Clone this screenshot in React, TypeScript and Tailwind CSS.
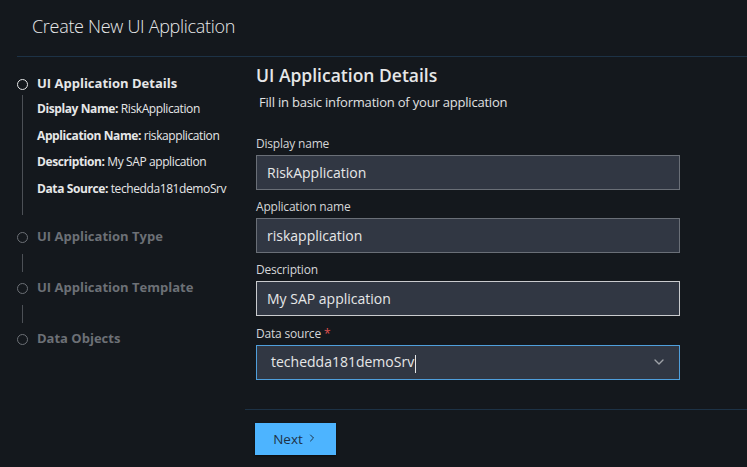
import { ChevronDown, ChevronRight } from "lucide-react";

const font = { fontFamily: '"Open Sans", "Noto Sans", sans-serif' };

function Field({
	label,
	value,
	required,
	variant = "default",
	select,
}: {
	label: string;
	value: string;
	required?: boolean;
	variant?: "default" | "light" | "focus";
	select?: boolean;
}) {
	const border =
		variant === "focus"
			? "border-[#4f9fdc]"
			: variant === "light"
				? "border-[#c9cbce]"
				: "border-[#6a6f77]";
	return (
		<div className="flex flex-col">
			<label className="text-[12px] leading-[16px] text-[#d4d6d8] tracking-[-0.2px] mb-[3px]">
				{label}
				{required && <span className="text-[#e0514f] ml-[3px]">*</span>}
			</label>
			<div
				className={`flex items-center justify-between w-[424px] h-[35px] bg-[#313743] border ${border} ${select ? "pl-[14px] pr-[12px]" : "pl-[10px]"}`}
			>
				<span className="text-[14px] text-[#e6e7e8]">
					{value}
					{select && <span className="inline-block w-px h-[18px] bg-[#e6e7e8] align-middle ml-[1px]" />}
				</span>
				{select && <ChevronDown size={16} strokeWidth={2} className="text-[#9ea2a8]" />}
			</div>
		</div>
	);
}

function Step({ title, active }: { title: string; active?: boolean }) {
	return (
		<div className="flex items-center gap-[9px] h-[18px]">
			<span className={`w-[11px] h-[11px] rounded-full border ${active ? "border-[#e6e7e8]" : "border-[#6c7076]"}`} />
			<span className={`text-[13px] font-bold ${active ? "text-[#e6e7e8]" : "text-[#6c7076]"}`}>{title}</span>
		</div>
	);
}

function Connector() {
	return <div className="ml-[5px] w-px bg-[#4c5056] h-[18px] mt-[8px] mb-[7px]" />;
}

export default function App() {
	const details = [
		["Display Name:", "RiskApplication"],
		["Application Name:", "riskapplication"],
		["Description:", "My SAP application"],
		["Data Source:", "techedda181demoSrv"],
	];
	return (
		<div className="w-[747px] h-[467px] bg-[#14181d] text-[#e6e7e8] flex flex-col overflow-hidden" style={font}>
			<div className="h-[56px] flex items-center pl-[32px] pb-[3px]">
				<h1 className="text-[18px] font-light text-[#e8e9ea] tracking-[-0.3px]">Create New UI Application</h1>
			</div>
			<div className="ml-[17px] h-px bg-[#1d3246]" />
			<div className="flex flex-1">
				<div className="w-[245px] pl-[17px] pt-[18px] flex flex-col">
					<Step title="UI Application Details" active />
					<div className="flex">
						<div className="ml-[5px] mt-[2px] w-px h-[120px] bg-[#4c5056]" />
						<div className="ml-[14px] flex flex-col gap-[9px] pt-[7px]">
							{details.map(([k, v]) => (
								<div key={k} className="text-[12px] leading-[17.5px] text-[#e6e7e8] tracking-[-0.4px]">
									<span className="font-bold">{k}</span> {v}
								</div>
							))}
						</div>
					</div>
					<div className="mt-[13px]">
						<Step title="UI Application Type" />
					</div>
					<Connector />
					<Step title="UI Application Template" />
					<Connector />
					<Step title="Data Objects" />
				</div>
				<div className="flex-1 flex flex-col">
					<div className="pl-[11px] pt-[7px] flex-1">
						<h2 className="text-[17.5px] font-semibold text-[#e6e7e8] leading-[22px]">UI Application Details</h2>
						<p className="text-[13px] text-[#e0e1e2] mt-[7px] ml-[3px] tracking-[-0.2px]">
							Fill in basic information of your application
						</p>
						<div className="mt-[23px] flex flex-col gap-[9px]">
							<Field label="Display name" value="RiskApplication" />
							<Field label="Application name" value="riskapplication" />
							<Field label="Description" value="My SAP application" variant="light" />
							<div className="mt-px">
								<Field label="Data source" value="techedda181demoSrv" required variant="focus" select />
							</div>
						</div>
					</div>
					<div className="h-px bg-[#1d3246]" />
					<div className="h-[57px] pl-[10px] pt-[13px]">
						<button className="w-[81px] h-[32px] bg-[#4db4ff] text-[#1e3246] text-[13.5px] flex items-center justify-center gap-[3px] shadow-[0_1px_2px_rgba(0,0,0,0.5)]">
							Next <ChevronRight size={12} strokeWidth={2} className="-mt-[3px]" />
						</button>
					</div>
				</div>
			</div>
		</div>
	);
}
